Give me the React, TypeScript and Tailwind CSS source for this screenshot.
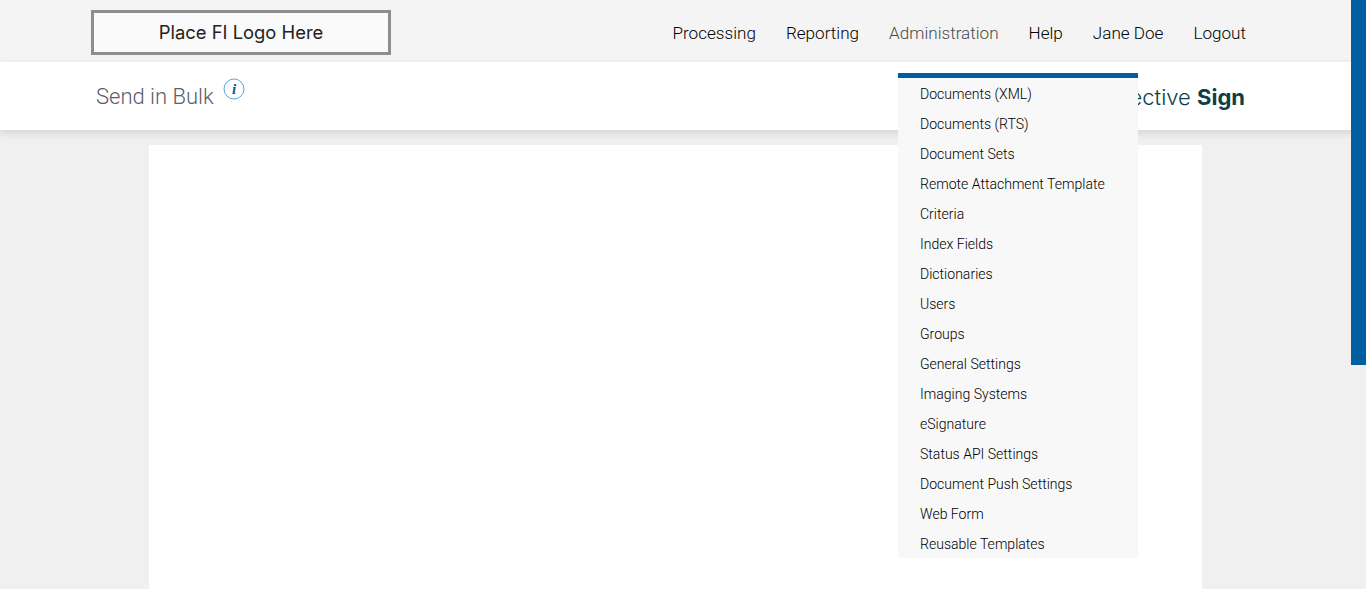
const NAV = ['Processing', 'Reporting', 'Administration', 'Help', 'Jane Doe', 'Logout'];

const MENU = [
  'Documents (XML)',
  'Documents (RTS)',
  'Document Sets',
  'Remote Attachment Template',
  'Criteria',
  'Index Fields',
  'Dictionaries',
  'Users',
  'Groups',
  'General Settings',
  'Imaging Systems',
  'eSignature',
  'Status API Settings',
  'Document Push Settings',
  'Web Form',
  'Reusable Templates',
];

export default function App() {
  return (
    <div className="relative h-[589px] overflow-hidden bg-[#f0f0f0] font-['Roboto',sans-serif]">
      {/* Top bar */}
      <header className="flex h-[62px] items-center justify-between bg-[#f4f4f4] pl-[91px] pr-[120px]">
        <div className="mt-[3px] flex h-[45px] w-[300px] items-center justify-center border-[3px] border-[#8e8e8e] bg-[#fafafa] font-['Inter',sans-serif] text-[18.4px] font-normal text-[#222]">
          Place FI Logo Here
        </div>
        <nav className="mt-[6px] flex gap-[30px]">
          {NAV.map((item) => (
            <a
              key={item}
              className={`text-[17.1px] font-light ${item === 'Administration' ? 'text-[#4a4a4a]' : 'text-black'}`}
            >
              {item}
            </a>
          ))}
        </nav>
      </header>

      {/* Page title */}
      <div className="relative flex h-[68px] items-center justify-between bg-white pl-[96px] pr-[121px] shadow-[0_3px_8px_rgba(0,0,0,0.12)]">
        <div className="mb-[2px] flex items-start">
          <h1 className="mt-[2px] text-[22px] font-light text-[#5b6068]">Send in Bulk</h1>
          <svg viewBox="0 0 22 22" className="ml-[9px] h-[22px] w-[22px]">
            <circle cx="11" cy="11" r="10" fill="none" stroke="#5ba7d8" strokeWidth="1" />
            <text x="11" y="16" textAnchor="middle" fontSize="15" fontWeight="700" fontStyle="italic" fontFamily="Liberation Serif, serif" fill="#005a9e">
              i
            </text>
          </svg>
        </div>
        <div className="mt-[2px] font-['Inter',sans-serif] text-[22px] font-light text-[#0f3f46]">
          Effective <span className="font-bold">Sign</span>
        </div>
      </div>

      {/* Content card */}
      <main className="mx-[149px] mt-[15px] h-[460px] w-[1053px] bg-white" />

      {/* Administration dropdown */}
      <ul className="absolute left-[898px] top-[73px] w-[240px] border-t-[5px] border-[#005ea2] bg-[#f8f8f8]">
        {MENU.map((item) => (
          <li key={item} className="flex h-[30px] items-center pl-[22px] pt-[4px] text-[14.05px] font-light text-black">
            {item}
          </li>
        ))}
      </ul>

      {/* Scrollbar thumb */}
      <div className="absolute right-0 top-0 h-[365px] w-[15px] bg-[#005ea2]" />
    </div>
  );
}
